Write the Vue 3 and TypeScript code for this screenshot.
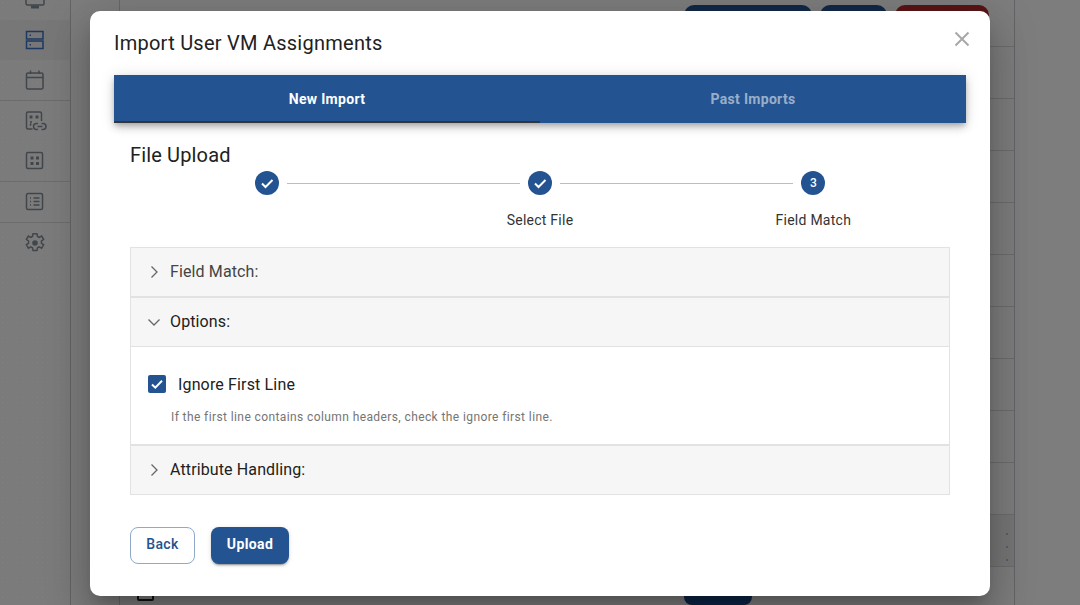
<script setup lang="ts">
const steps = ['', 'Select File', 'Field Match']
const rows = Array.from({ length: 11 }, (_, i) => i)
</script>

<template>
  <div class="page">
    <aside class="sidebar">
      <div class="nav-item top">
        <svg class="ico" viewBox="0 0 24 24"><rect x="3" y="-8" width="18" height="13" rx="1.500" /><path class="stand" d="M8 7h8" /></svg>
      </div>
      <div class="nav-item active">
        <svg class="ico" viewBox="0 0 24 24"><rect x="3.500" y="3.500" width="16.500" height="7.500" /><rect x="3.500" y="13" width="16.500" height="7.500" /><path d="M6.500 7.200h1.500M6.500 16.800h1.500" /></svg>
      </div>
      <div class="nav-item last-in-group">
        <svg class="ico" viewBox="0 0 24 24"><rect x="3.500" y="5" width="16.500" height="16" rx="1.500" /><path d="M3.500 9.500h16.500M7.500 2.500V6M16 2.500V6" /></svg>
      </div>
      <div class="nav-item">
        <svg class="ico" viewBox="0 0 24 24"><path d="M9.500 20H5a1.500 1.500 0 0 1-1.500-1.500v-14A1.500 1.500 0 0 1 5 3h12a1.500 1.500 0 0 1 1.500 1.500V12" /><path class="fill" d="M6.500 6.500h3v3h-3zM12.500 6.500h3v3h-3z" /><path d="M7 13h2M7 16.500l1.200-2" /><path d="M15 14.500h-1.500a3 3 0 0 0 0 6H15M18.500 14.500H20a3 3 0 0 1 0 6h-1.500M14.500 17.500h5" /></svg>
      </div>
      <div class="nav-item last-in-group">
        <svg class="ico" viewBox="0 0 24 24"><rect x="3.500" y="3.500" width="16" height="16" rx="1.500" /><path class="fill" d="M7.500 7.500h3v3h-3zM13 7.500h3v3h-3zM7.500 13h3v3h-3zM13 13h3v3h-3z" /></svg>
      </div>
      <div class="nav-item last-in-group">
        <svg class="ico" viewBox="0 0 24 24"><rect x="3.500" y="3.500" width="16" height="16" rx="1.500" /><path d="M10.500 8h6M10.500 11.500h6M10.500 15h6M7 8h1M7 11.500h1M7 15h1" /></svg>
      </div>
      <div class="nav-item">
        <svg class="ico" viewBox="0 0 24 24"><path d="M10 2.800h4l.5 2.700 1.700.8 2.400-1.300 2 3.400-2.200 1.700v2l2.200 1.700-2 3.400-2.400-1.300-1.700.8-.5 2.700h-4l-.5-2.700-1.700-.8-2.400 1.300-2-3.400 2.200-1.700v-2L3.400 8.400l2-3.400 2.400 1.300 1.700-.8z" /><circle class="fill" cx="12" cy="12" r="2.800" /></svg>
      </div>
    </aside>
    <div class="subnav"></div>
    <main class="content">
      <div class="toolbar">
        <span class="tb-btn navy wide"></span>
        <span class="tb-btn navy mid"></span>
        <span class="tb-btn red"></span>
      </div>
      <div v-for="r in rows" :key="r" class="row" :class="{ hover: r === 9, tail: r === 10 }">
        <template v-if="r === 9"><span class="kebab"><i></i><i></i><i></i></span></template>
        <template v-if="r === 10">
          <span class="row-icon"></span>
          <span class="row-btn"></span>
        </template>
      </div>
    </main>

    <div class="overlay">
      <section class="modal">
        <header class="modal-head">
          <h2>Import User VM Assignments</h2>
          <svg class="close" viewBox="0 0 16 16"><path d="M1.500 1.500l13 13M14.500 1.500l-13 13" /></svg>
        </header>
        <nav class="tabs">
          <div class="tab on">New Import</div>
          <div class="tab">Past Imports</div>
        </nav>
        <div class="body">
          <h3>File Upload</h3>
          <div class="stepper">
            <span class="dot"><svg viewBox="0 0 24 24"><path d="M7 12.500l3.500 3.500L17.500 9" /></svg></span>
            <span class="line"></span>
            <span class="dot"><svg viewBox="0 0 24 24"><path d="M7 12.500l3.500 3.500L17.500 9" /></svg></span>
            <span class="line"></span>
            <span class="dot num">3</span>
          </div>
          <div class="labels">
            <span v-for="s in steps" :key="s">{{ s }}</span>
          </div>
          <div class="accordion">
            <div class="acc-head first">
              <svg class="chev" viewBox="0 0 16 16"><path d="M5.500 2.500L11 8l-5.500 5.500" /></svg>
              <span>Field Match:</span>
            </div>
            <div class="acc-head open">
              <svg class="chev" viewBox="0 0 16 16"><path d="M2.500 5.500L8 11l5.500-5.500" /></svg>
              <span>Options:</span>
            </div>
            <div class="acc-body">
              <label class="check">
                <span class="box"><svg viewBox="0 0 18 18"><path d="M4 9.500l3.300 3.200L14 5.800" /></svg></span>
                <span>Ignore First Line</span>
              </label>
              <p class="hint">If the first line contains column headers, check the ignore first line.</p>
            </div>
            <div class="acc-head closing">
              <svg class="chev" viewBox="0 0 16 16"><path d="M5.500 2.500L11 8l-5.500 5.500" /></svg>
              <span>Attribute Handling:</span>
            </div>
          </div>
          <div class="actions">
            <button class="btn ghost">Back</button>
            <button class="btn solid">Upload</button>
          </div>
        </div>
      </section>
    </div>
  </div>
</template>

<style>
html, body { margin: 0; background: #f7f7f7; }
</style>

<style scoped>
.page {
  position: relative;
  display: flex;
  width: 1080px;
  height: 605px;
  overflow: hidden;
  background: #fafafa;
  font-family: Roboto, "Liberation Sans", sans-serif;
  color: #212529;
}
.sidebar {
  width: 70px;
  flex: none;
  display: flex;
  flex-direction: column;
  border-right: 1px solid #c8c8c8;
  background-color: #ffffff;
  background-image: radial-gradient(rgba(255, 255, 255, 0.9) 0.5px, rgba(0, 0, 0, 0.03) 0.7px);
  background-size: 5px 5px;
}
.nav-item {
  height: 40px;
  flex: none;
  display: flex;
  align-items: center;
  justify-content: center;
  box-sizing: border-box;
}
.nav-item.top { height: 20px; align-items: flex-start; }
.nav-item.active { background: #eeeeee; }
.nav-item.active .ico { stroke: #3a72c4; }
.nav-item.last-in-group { height: 41px; border-bottom: 1px solid #d8d8d8; }
.ico {
  width: 24px;
  height: 24px;
  flex: none;
  fill: none;
  overflow: visible;
  stroke: #838c96;
  stroke-width: 1.500;
}
.ico .fill { fill: #838c96; stroke: none; }
.ico .stand { stroke-width: 3; }
.nav-item.top .ico { overflow: hidden; }
.subnav {
  width: 48px;
  flex: none;
  border-right: 1px solid #d0d0d0;
  background: #fbfbfb;
}
.content {
  width: 894px;
  flex: none;
  border-right: 1px solid #c4c8ce;
  background: #fafafa;
}
.toolbar {
  height: 47px;
  box-sizing: border-box;
  padding: 5px 25px 0 0;
  display: flex;
  justify-content: flex-end;
  gap: 8px;
  border-bottom: 1px solid #d8d8d8;
}
.tb-btn { height: 34px; border-radius: 10px; }
.navy { background: #235390; }
.wide { width: 128px; }
.mid { width: 67px; }
.red { width: 94px; background: #b3292b; }
.row {
  height: 52px;
  box-sizing: border-box;
  border-bottom: 1px solid #d8d8d8;
  display: flex;
}
.row.hover {
  background-color: #ececec;
  background-image: radial-gradient(rgba(255, 255, 255, 0.5) 0.5px, transparent 0.7px);
  background-size: 4px 4px;
}
.row.tail { border-bottom: 0; }
.kebab {
  margin: 18px 0 0 auto;
  padding-right: 6px;
  display: flex;
  flex-direction: column;
  gap: 11px;
}
.kebab i { width: 2px; height: 2px; border-radius: 50%; background: #8fb0e0; display: block; }
.row-icon {
  width: 17px;
  height: 16px;
  margin: 18px 0 0 17px;
  border: 2px solid #222;
  border-radius: 2px;
  box-sizing: border-box;
  flex: none;
}
.row-btn {
  width: 68px;
  height: 34px;
  margin: 4px 0 0 530px;
  border-radius: 8px;
  background: #1a4a8f;
  flex: none;
}
.overlay {
  position: absolute;
  inset: 0;
  background: rgba(0, 0, 0, 0.5);
  display: flex;
  justify-content: center;
  align-items: flex-start;
  padding-top: 11px;
}
.modal {
  width: 900px;
  height: 585px;
  flex: none;
  box-sizing: border-box;
  padding: 0 24px;
  background: #fff;
  border-radius: 10px;
  box-shadow: 0 11px 15px -7px rgba(0, 0, 0, 0.2), 0 24px 38px 3px rgba(0, 0, 0, 0.14), 0 9px 46px 8px rgba(0, 0, 0, 0.12);
}
.modal-head {
  height: 64px;
  display: flex;
  align-items: flex-start;
  justify-content: space-between;
}
h2 {
  margin: 20px 0 0;
  font-size: 20px;
  line-height: 24px;
  font-weight: 400;
  letter-spacing: 0.25px;
  color: #212121;
}
.close {
  width: 16px;
  height: 16px;
  margin: 20px -4px 0 0;
  fill: none;
  stroke: #a8a8a8;
  stroke-width: 2;
}
.tabs {
  height: 48px;
  display: grid;
  grid-template-columns: 1fr 1fr;
  background: #235390;
  box-shadow: 0 3px 5px -1px rgba(0, 0, 0, 0.2), 0 5px 8px 0 rgba(0, 0, 0, 0.14), 0 1px 14px 0 rgba(0, 0, 0, 0.12);
}
.tab {
  display: flex;
  align-items: center;
  justify-content: center;
  font-size: 14px;
  font-weight: 700;
  letter-spacing: 0.3px;
  color: rgba(255, 255, 255, 0.55);
}
.tab.on {
  color: #fff;
  box-shadow: inset 0 -2px 0 #33363b;
}
.body { padding: 0 16px; }
h3 {
  margin: 20px 0 0;
  height: 24px;
  font-size: 20px;
  line-height: 24px;
  font-weight: 400;
  letter-spacing: 0.15px;
  color: #212121;
}
.stepper {
  margin-top: 4px;
  padding: 0 124.670px;
  display: flex;
  align-items: center;
}
.dot {
  width: 24px;
  height: 24px;
  flex: none;
  border-radius: 50%;
  background: #235390;
  display: flex;
  align-items: center;
  justify-content: center;
  color: #fff;
  font-size: 12px;
  font-weight: 500;
}
.dot svg { width: 24px; height: 24px; fill: none; stroke: #fff; stroke-width: 2; }
.line { flex: 1; height: 1px; margin: 1px 8px 0; background: #bdbdbd; }
.labels {
  display: grid;
  grid-template-columns: repeat(3, 1fr);
  margin-top: 15px;
  height: 20px;
  line-height: 20px;
  font-size: 14px;
  text-align: center;
  letter-spacing: 0.25px;
  color: #333;
}
.accordion {
  margin-top: 17px;
  border: 1px solid #e2e2e2;
}
.acc-head {
  box-sizing: border-box;
  height: 50px;
  display: flex;
  align-items: center;
  gap: 8px;
  padding-left: 15px;
  background: #f6f6f6;
  font-size: 16px;
  letter-spacing: 0.12px;
  color: #212121;
}
.acc-head.first { border-bottom: 2px solid #e2e2e2; color: #444; padding-bottom: 1px; }
.acc-head.open { height: 49px; border-bottom: 1px solid #e2e2e2; padding-bottom: 1px; }
.acc-head.closing { height: 48px; padding-bottom: 1px; }
.chev { width: 16px; height: 16px; flex: none; fill: none; stroke: #666; stroke-width: 1.300; }
.acc-body {
  height: 99px;
  box-sizing: border-box;
  padding: 28px 0 0 17px;
  border-bottom: 2px solid #e2e2e2;
}
.check {
  display: flex;
  align-items: center;
  gap: 12px;
  font-size: 16px;
  letter-spacing: 0.15px;
  height: 18px;
  color: #212121;
}
.box {
  width: 18px;
  height: 18px;
  border-radius: 2px;
  background: #235390;
  flex: none;
}
.box svg { width: 18px; height: 18px; display: block; fill: none; stroke: #fff; stroke-width: 2; }
.hint {
  margin: 17px 0 0 23px;
  font-size: 12px;
  line-height: 14px;
  letter-spacing: 0.4px;
  color: #757575;
}
.actions {
  margin-top: 32px;
  display: flex;
  gap: 16px;
}
.btn {
  height: 37px;
  box-sizing: border-box;
  border-radius: 8px;
  font-family: inherit;
  font-size: 14px;
  font-weight: 500;
  letter-spacing: 0.4px;
  padding: 0 0 3px;
}
.ghost {
  width: 65px;
  background: #fff;
  color: #235390;
  border: 1px solid #90a9c8;
}
.solid {
  width: 78px;
  background: #235390;
  color: #fff;
  border: 0;
  font-weight: 700;
  box-shadow: 0 3px 1px -2px rgba(0, 0, 0, 0.2), 0 2px 2px 0 rgba(0, 0, 0, 0.14), 0 1px 5px 0 rgba(0, 0, 0, 0.12);
}
</style>
